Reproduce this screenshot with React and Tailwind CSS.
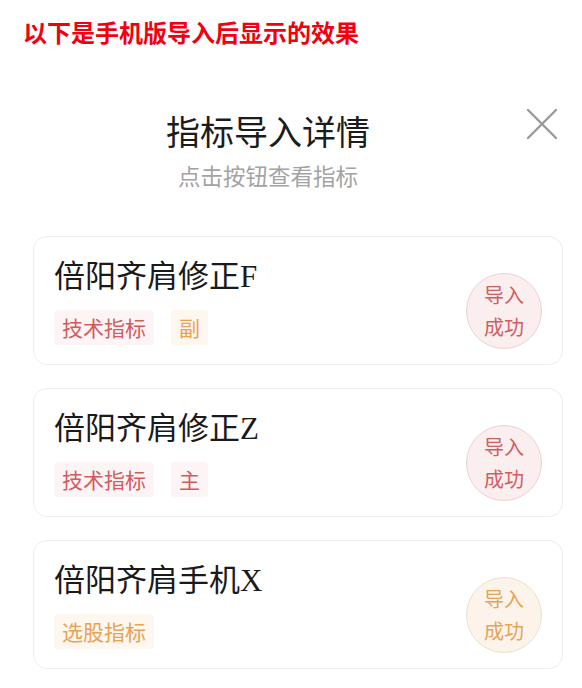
import React from 'react';

const items = [
    {
        name: '倍阳齐肩修正F',
        tags: [
            { label: '技术指标', tone: 'red' },
            { label: '副', tone: 'orange' }
        ],
        tone: 'red'
    },
    {
        name: '倍阳齐肩修正Z',
        tags: [
            { label: '技术指标', tone: 'red' },
            { label: '主', tone: 'red' }
        ],
        tone: 'red'
    },
    {
        name: '倍阳齐肩手机X',
        tags: [{ label: '选股指标', tone: 'orange' }],
        tone: 'orange'
    }
];

const tagStyles = {
    red: 'bg-[#fdf5f5] text-[#d45a5e]',
    orange: 'bg-[#fdf7ef] text-[#e8a254]'
};

const badgeStyles = {
    red: 'bg-[#fbeeee] border-[#ead2d3] text-[#cf5d62]',
    orange: 'bg-[#fcf3ea] border-[#efdfcc] text-[#e6a35a]'
};

function Card({ item }) {
    return (
        <div className="flex items-start justify-between rounded-[14px] border border-[#ededed] bg-white pl-[20px] pr-[20px] py-[20px] h-[129px]">
            <div className="flex flex-col">
                <div className="text-[31px] leading-[38px] text-[#1a1a1a] mt-[1px]" style={{ fontFamily: '"Liberation Serif", "Noto Sans CJK SC", serif' }}>
                    {item.name}
                </div>
                <div className="flex gap-[17px] mt-[14px]">
                    {item.tags.map((tag) => (
                        <span key={tag.label} className={`h-[35px] px-[8px] flex items-center text-[21px] rounded-[4px] ${tagStyles[tag.tone]}`}>
                            {tag.label}
                        </span>
                    ))}
                </div>
            </div>
            <div className={`w-[76px] h-[76px] mt-[16px] rounded-full border flex flex-col items-center justify-center text-[20px] leading-[32px] ${badgeStyles[item.tone]}`}>
                <span>导入</span>
                <span>成功</span>
            </div>
        </div>
    );
}

export default function App() {
    return (
        <div className="w-[582px] h-[688px] bg-white overflow-hidden" style={{ fontFamily: '"Noto Sans CJK SC", "Noto Sans", sans-serif' }}>
            <div className="pl-[23px] pt-[16px] h-[62px] text-[24px] leading-[32px] font-bold text-[#f2000f]">
                以下是手机版导入后显示的效果
            </div>

            <div className="relative pt-[47px] pr-[46px] flex flex-col items-center">
                <div className="text-[34px] leading-[44px] text-[#1c1c1c]">指标导入详情</div>
                <div className="text-[22.5px] leading-[30px] mt-[7px] text-[#a3a3a3]">点击按钮查看指标</div>
                <button className="absolute right-[24px] top-[46px] w-[32px] h-[32px] flex items-center justify-center">
                    <svg width="32" height="32" viewBox="0 0 32 32" fill="none" stroke="#9a9a9a" strokeWidth="2.4" strokeLinecap="round">
                        <path d="M2 2 L30 30 M30 2 L2 30" />
                    </svg>
                </button>
            </div>

            <div className="flex flex-col gap-[23px] mt-[46px] pl-[33px] pr-[19px]">
                {items.map((item) => (
                    <Card key={item.name} item={item} />
                ))}
            </div>
        </div>
    );
}
